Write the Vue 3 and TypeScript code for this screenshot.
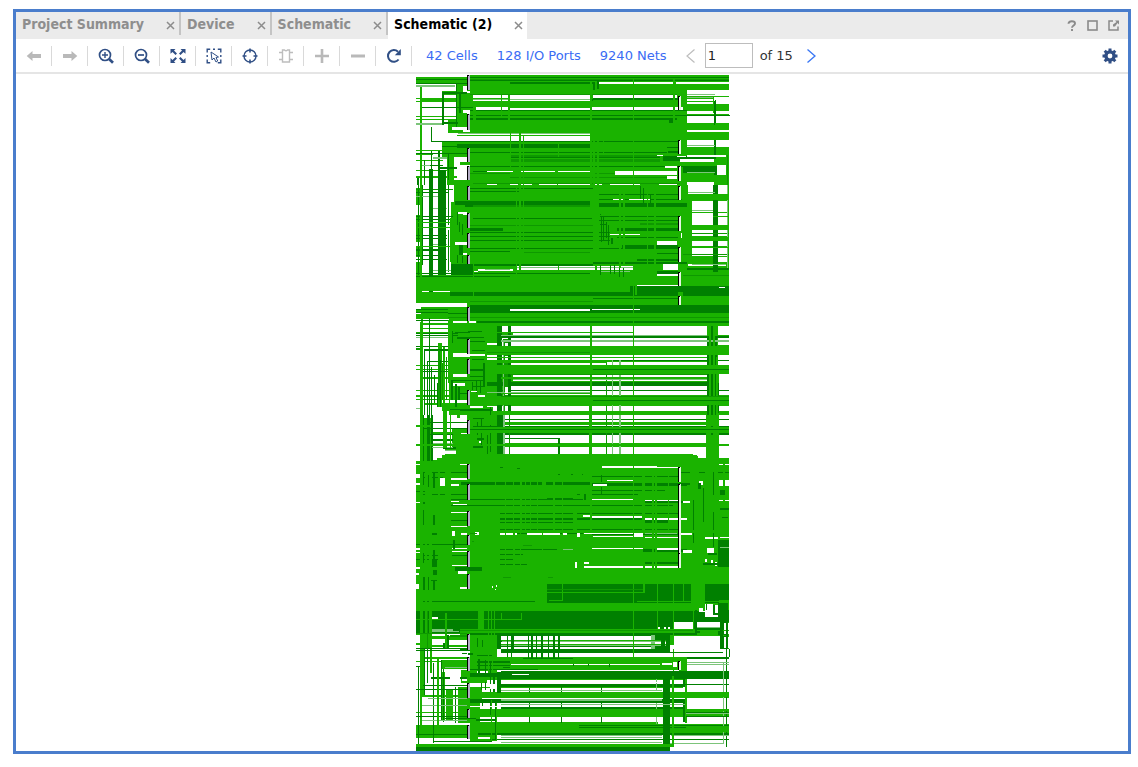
<script setup lang="ts">
import { ref } from 'vue'

const tabs = ['Project Summary', 'Device', 'Schematic', 'Schematic (2)']
const active = ref(3)
const page = ref('1')
const stats = ['42 Cells', '128 I/O Ports', '9240 Nets']

type Tone = 'L' | 'D' | 'M' | 'P' | 'W'
type Layer = [Tone, string]
interface Band { top: number; layers: Layer[] }

const tones: Record<Tone, string> = {
  L: '#1ab300', D: '#008000', M: '#0e9900', P: '#7cc47a', W: '#ffffff',
}

/* Boxes are "x1 y1 x2 y2" in thirds of a pixel, measured from each band's top. */
const bands: Band[] = [
  {
    top: 0,
    layers: [
      ['L', '18 22 180 120,180 15 958 360,18 15 20 16'],
      ['W', '18 15 171 22,18 40 137 360,137 64 180 70,160 48 172 66'],
      ['W', '567 26 790 29,796 26 958 29,567 37 668 42,672 37 790 42,798 37 958 43,832 61 958 102,190 76 545 92,550 76 802 84,190 112 820 120,832 123 958 132,832 138 958 161,832 180 958 186,832 211 958 232,144 187 540 212'],
      ['L', '18 22 172 42,30 50 36 360,36 88 190 92,95 64 142 74,18 84 190 87,18 93 190 96,137 42 158 190,30 94 300 97,190 84 300 86,190 97 545 112,300 92 545 113,18 138 140 140,18 147 140 150,115 150 145 188,115 186 300 190,300 187 540 189,140 194 540 198,95 213 180 262,18 240 180 243,18 252 70 255,18 270 100 273,18 300 120 303,18 319 140 324,110 262 132 345,130 330 180 348,150 275 180 285,832 78 958 80,832 102 958 121,550 121 830 128,832 160 958 180,832 186 958 210,832 234 958 253,832 276 958 284,820 315 958 333'],
      ['D', '18 28 172 31,18 38 170 41,95 65 101 165,95 65 170 72,36 111 190 114,137 42 141 180,148 72 152 180,95 155 160 162,64 172 67 216,64 213 300 216,18 248 170 251,85 243 90 300,57 297 70 360,84 300 108 360,84 290 140 298,42 270 45 360,20 323 26 360,95 228 150 232,64 243 67 300,114 250 118 330,36 285 100 288'],
      ['D', '300 35 550 42,180 22 958 25,180 31 958 33,562 32 567 56,550 36 554 60,550 85 805 91,545 86 550 92,180 121 830 124,180 135 960 138,180 145 800 149,140 222 545 235,180 213 805 217,180 247 770 250,300 262 750 265,760 258 830 272,820 262 918 267,820 288 920 308,912 211 918 263,912 290 920 315,180 288 820 291,180 350 820 353,190 302 230 306,778 150 790 160,770 230 805 235,775 243 805 248,912 92 915 165,915 90 918 160,832 348 958 351'],
      ['M', '180 28 958 29,180 72 800 74,300 255 750 261,300 267 750 276,300 322 805 325,190 338 810 341,180 308 300 311,550 308 740 312,950 255 955 360'],
      ['W', '230 303 310 305,330 303 435 305,445 303 540 306,614 304 802 315,765 288 802 294,770 318 802 328,740 254 760 257,800 257 828 260,830 255 948 260,920 284 948 315,830 336 912 347,810 267 912 275,230 343 260 346,300 343 324 346,334 343 365 346,386 343 440 346,445 343 540 346,550 343 576 346,600 343 690 346,748 343 800 346,140 295 178 300,140 312 172 318,125 170 172 181,152 128 172 136,120 348 170 352'],
      ['P', '18 45 135 50,18 160 95 165,832 71 915 73,832 80 910 84,70 262 110 266,36 285 60 288,832 306 915 310,190 88 545 90,144 190 540 192,832 226 915 229'],
      ['L', '274 74 277 142,295 74 300 150,300 188 304 300,328 190 333 360,338 195 342 360,541 36 546 360,550 196 556 360,562 202 566 360,578 208 582 250,668 27 672 360,790 27 795 160,443 222 447 262,190 92 197 150,810 84 912 87,810 94 912 97,910 78 913 130,145 128 172 170'],
    ],
  },
  {
    top: 115,
    layers: [
      ['L', '18 0 958 375'],
      ['W', '36 0 133 52,36 52 124 270,18 0 30 8,18 60 30 90,18 170 30 185,18 215 30 230,45 205 122 240,36 240 122 258,18 320 60 330,36 318 120 324,125 236 150 244,160 86 171 90,140 82 172 86,134 170 170 180,150 205 172 210'],
      ['W', '834 0 950 28,845 48 950 80,845 84 950 120,830 136 950 154,845 168 950 184,845 188 950 212,925 215 950 232,835 236 948 244,740 133 803 138,600 146 690 149,812 145 826 160,740 168 802 186,205 251 310 257,320 244 668 254,760 235 803 256,740 268 803 272,680 299 803 302,834 120 950 123'],
      ['D', '24 0 27 270,36 0 39 240,57 0 69 325,84 0 108 270,114 0 118 260,908 0 924 84,908 85 924 262,830 250 958 256,18 264 540 268,60 324 130 330,122 237 188 270,188 237 550 244,820 303 958 333,18 272 300 274,910 290 958 293'],
      ['D', '135 48 540 66,180 10 550 13,180 18 330 20,550 28 803 31,550 42 830 46,550 55 830 65,190 99 545 102,180 130 280 138,620 130 805 137,180 142 600 145,180 152 600 155,180 165 600 169,180 189 805 193,180 198 300 202,570 92 803 95,560 105 803 108,740 205 803 208,680 222 803 228,550 232 830 236,740 258 803 267,620 156 803 160,635 180 803 188,180 290 650 293,580 306 658 310,120 304 660 307,120 321 805 332,120 344 550 349,18 345 120 350,550 338 805 341,300 371 958 375,18 360 188 375,660 302 958 320,18 12 115 15,18 20 118 24,18 93 130 96,18 103 130 106,18 150 110 153,18 160 110 163,18 193 108 197,18 210 108 214,18 222 110 226'],
      ['M', '18 12 130 14,190 60 540 66,180 120 550 123,18 291 650 293,190 282 650 284,190 335 550 338,550 284 660 290,690 115 805 119,820 143 958 147,820 158 958 162,820 208 958 211,340 200 540 203,680 352 958 355,820 270 958 273'],
      ['P', '18 32 84 37,70 70 112 73,70 110 112 114,70 176 112 180,834 20 915 24,834 75 910 79,320 245 668 249,570 257 660 260,18 352 185 355,225 252 300 255,845 236 948 239,70 255 122 258,950 0 955 250'],
      ['D', '84 0 108 270,57 0 69 325'],
      ['W', '18 355 180 358,188 257 204 259,110 120 120 135,610 42 640 45,656 42 720 45,927 305 945 308,176 366 185 370,184 372 540 374'],
      ['L', '18 110 180 113,18 125 180 128,18 183 180 186,18 275 958 300,30 0 36 375,18 300 660 318,18 320 120 340,120 100 135 232,125 60 165 80,18 336 550 343,550 0 567 232,815 28 958 46,815 68 845 180,815 120 958 136,815 155 958 168,815 185 958 187,908 92 958 94,318 0 322 300,328 0 332 260,338 0 342 235,628 0 632 250,640 0 644 240,710 0 715 265,733 0 737 255,445 244 448 255,668 240 672 375,676 250 681 330,188 237 192 350,555 240 560 290'],
      ['D', '572 95 574 170,580 97 582 165,588 110 590 160,595 120 598 180,602 160 610 178,570 86 574 90,570 118 590 120,570 240 573 270,600 240 604 268,612 240 616 268,626 250 630 275,640 250 643 275,140 80 143 120,148 110 151 140,155 118 158 150,147 180 158 210,140 210 144 235,155 212 158 235,690 4 693 42,700 8 703 60,720 30 724 60'],
    ],
  },
  {
    top: 230,
    layers: [
      ['L', '18 0 958 375'],
      ['W', '18 8 172 20,18 20 34 375,38 52 116 375,273 78 890 97,310 97 890 106,273 112 890 138,230 165 890 180,295 187 890 197,310 222 890 244,295 258 890 286,230 318 890 334,230 346 890 375,925 78 958 104,925 110 958 136,925 166 958 180,925 184 958 196,928 222 958 286,928 318 958 334,928 348 958 375,310 27 540 33,545 27 690 31,118 64 172 70,150 92 180 116,126 160 180 176,130 222 172 238,130 250 172 258,120 300 172 316,130 176 172 208'],
      ['D', '180 16 958 38,18 26 115 29,18 35 115 38,115 40 172 43,18 60 120 63,18 98 172 101,18 104 172 107,18 137 172 140,230 246 890 259,272 108 958 113,262 78 276 375,890 112 896 375,903 70 908 375,916 112 920 375,295 78 303 375,310 180 590 184,605 180 958 183,272 270 890 274,928 270 958 274,272 356 890 362,928 358 958 362,200 62 958 68,922 250 928 340'],
      ['W', '300 27 540 33,545 27 690 30,276 86 294 97,276 128 294 136,280 168 293 178,280 262 293 283,280 348 293 375'],
      ['M', '280 118 293 375,588 183 592 375,18 145 30 150'],
      ['P', '280 125 283 375,272 120 958 125,272 106 890 108,310 138 890 139,310 237 890 239,230 276 540 279,272 350 540 353,605 180 608 375,628 180 632 375,18 110 116 114,928 290 958 292,18 325 30 328,272 373 890 375,928 372 958 374'],
      ['W', '284 128 294 138,284 168 293 180,284 260 293 285,284 318 293 334,284 348 293 370'],
      ['L', '18 29 172 37,18 42 172 55,18 55 125 58,38 70 172 75,38 84 118 87,180 38 958 62,180 69 910 78,230 139 958 164,180 171 890 174,230 180 590 188,230 196 958 221,272 231 890 236,180 287 958 316,190 334 890 346,272 279 540 282,18 96 310 100,300 96 670 99,30 65 38 375,115 60 130 250,84 130 96 320,100 140 105 320,145 70 230 120,130 117 225 160,125 170 230 220,18 195 172 198,18 208 172 211,40 232 172 236,18 270 172 273,18 285 172 291,18 297 172 301,42 310 172 314,95 310 180 334,100 334 112 375,180 140 230 165,165 180 230 222,165 235 230 285,150 320 250 375,541 70 547 375,537 285 547 375,668 0 672 375,897 68 902 375,909 70 914 375,919 170 925 375'],
      ['D', '42 150 45 375,50 185 53 375,57 55 60 375,64 200 67 330,72 225 75 310,80 250 83 320,90 180 93 320,125 92 128 130,134 95 180 100,140 112 180 117,42 148 115 152,50 183 115 187,40 213 115 216,124 240 128 300,136 252 140 320,145 260 149 300,150 280 172 283,125 240 225 244,180 228 225 231,185 258 225 262,150 328 245 332,120 326 170 330,62 328 66 375,120 345 145 350,175 92 215 96,176 122 225 126,180 110 222 113,185 150 225 153,185 176 222 180,180 208 222 212,185 245 190 270,198 240 202 280,210 240 214 280,220 190 225 260,240 320 244 350,200 62 240 65,200 370 230 374,550 208 958 211,550 299 958 303'],
      ['M', '180 50 958 52,180 2 550 5,115 50 172 52,300 222 890 224,230 156 540 158,272 287 958 289,84 150 90 300,96 190 99 300,108 170 112 300'],
      ['W', '176 64 198 68,180 163 225 168,182 272 200 276,205 286 225 290,180 318 220 324,200 348 235 354,232 130 260 136'],
    ],
  },
  {
    top: 345,
    layers: [
      ['L', '18 0 958 375'],
      ['W', '18 0 30 138,38 0 140 8,70 8 172 40,66 40 126 95,70 95 105 135,105 104 140 118,280 0 890 22,280 30 890 36,280 60 890 84,280 96 890 117,928 0 958 34,928 60 958 86,928 94 958 140,865 96 888 138,850 96 890 122'],
      ['D', '40 0 43 138,50 0 60 138,64 0 70 138,54 20 170 23,38 38 172 42,50 56 130 60,66 72 130 77,100 96 140 102,262 0 280 117,272 12 890 16,928 12 958 15,190 34 958 36,280 55 958 60,280 68 449 72,444 70 449 117,240 30 244 110,230 60 234 117,190 10 222 13,195 40 222 44,200 70 222 74,142 94 220 98,200 20 204 60,212 12 216 90'],
      ['M', '588 0 592 117,297 0 301 117'],
      ['P', '280 0 284 117,606 0 609 117,628 0 632 117,66 95 130 98,105 106 140 109,70 85 130 88,272 90 890 91'],
      ['L', '70 52 172 56,18 30 60 36,100 0 112 100,120 0 124 100,18 86 172 93,180 37 958 53,230 88 958 94,30 0 38 375,80 130 958 375,95 120 860 140,105 116 828 130,138 60 190 120,541 0 547 120,536 0 542 120,668 0 672 130,888 0 902 140,910 0 926 140'],
      ['D', '180 43 958 46,154 202 540 209,540 205 830 213,30 170 172 174,30 237 172 241,120 252 520 256,40 262 60 266,120 270 790 273,545 183 803 187,545 224 765 228,545 236 685 239,270 294 805 296,270 310 670 314,270 322 500 324,545 310 805 314,270 343 805 349,120 315 172 319,270 156 280 158,320 159 330 161,410 250 490 254,400 217 405 221,700 258 825 264,545 357 830 362,270 353 550 357,705 308 776 325,820 205 875 210,812 172 958 175,66 345 82 362,40 345 44 362,18 186 100 190,18 228 60 232'],
      ['W', '150 0 172 12,154 54 172 58,18 148 30 151,18 176 30 190,18 205 30 210,90 190 104 212,122 190 172 194,122 208 148 212,150 147 172 150,122 257 148 260,130 268 170 271,18 260 30 263,122 290 172 294,122 332 172 336,125 350 135 362,150 352 170 358,195 350 206 356,18 345 30 364,206 78 214 84,575 153 740 158,740 156 804 160,548 207 590 214,590 194 668 199,545 252 668 256,700 255 803 258,545 303 668 309,672 303 696 308,704 308 804 316,548 353 803 356,545 360 803 364,285 350 305 358,320 352 346 360,365 352 370 360,382 350 399 359,404 352 450 360,520 300 545 306,520 345 540 350,820 258 858 263,812 308 832 316,845 198 880 210,927 196 958 212,868 358 882 362,928 148 958 151,928 256 958 259,935 350 958 353,812 352 845 355'],
      ['L', '30 140 38 375,45 140 65 375,84 140 90 375,105 140 122 375,254 200 258 215,284 150 287 375,308 150 313 375,330 150 335 375,345 150 349 375,360 150 364 375,380 150 383 375,395 150 408 250,430 150 436 375,455 150 460 375,490 280 500 375,541 120 547 375,668 130 672 375,696 160 704 375,726 160 731 375,736 160 742 375,840 140 868 375,884 140 908 375,912 140 925 375,940 140 945 375,775 160 778 375'],
      ['D', '40 175 43 210,54 180 57 215,70 175 74 220,40 285 43 330,70 300 74 330,848 255 851 350,878 220 881 320,908 170 911 240,908 290 911 355,865 205 872 222,930 225 945 240,930 280 958 284,935 305 955 309,573 180 576 200,573 215 576 240,445 178 449 181,484 178 488 181,515 178 519 181,500 236 510 239,523 236 527 255,550 356 803 359'],
    ],
  },
  {
    top: 460,
    layers: [
      ['L', '18 0 958 375'],
      ['D', '18 242 870 310,412 162 958 210,412 210 928 220,270 10 520 13,545 12 803 16,270 58 440 61,270 72 340 76,270 86 310 88,270 102 350 105,700 58 830 66,705 96 803 102,135 110 215 122,130 176 415 179,30 213 375 217,120 235 375 240,260 164 412 176,925 30 958 112,18 42 172 46,30 75 172 78,18 88 115 91,60 10 85 16,925 220 955 375,858 240 958 277,860 277 935 297,180 310 860 316,262 316 780 375,860 295 938 302'],
      ['L', '18 225 870 242,30 162 412 210,375 178 412 242,842 162 880 242,375 225 860 242,150 298 860 310,180 316 262 375'],
      ['W', '125 4 136 18,154 10 172 16,195 6 206 14,270 8 320 15,350 8 450 15,460 8 470 15,500 8 510 20,522 8 668 12,548 17 668 21,672 8 698 20,704 20 803 23,545 54 668 58,672 54 698 58,735 55 803 60,820 60 846 68,812 10 845 14,18 55 30 59,18 65 30 68,18 112 30 116,18 130 28 136,122 53 172 57,122 62 172 66,125 105 172 109,145 124 172 132,18 162 28 176,150 172 172 176,522 97 538 101,522 109 700 113,705 109 803 113,496 95 500 113,885 20 925 28,890 55 912 70,886 88 890 96,904 90 908 104,915 96 922 108,930 20 958 24,868 234 888 245,885 223 910 256,915 226 925 250,885 256 925 260,792 277 850 296,860 277 930 292,792 318 936 356,780 346 936 356,780 363 936 375,942 280 958 312,942 320 958 354,942 363 958 375,743 290 750 296,762 290 767 296,775 290 780 296,18 266 30 270,64 262 84 266,18 315 30 375,66 313 150 318,66 326 104 357,114 360 172 375,116 330 172 357,273 319 725 330,273 336 780 342,273 350 725 357,273 370 750 375,247 168 250 174,257 165 262 170,254 178 258 180'],
      ['P', '66 298 128 302,66 304 148 307,66 309 148 312,930 50 958 53,275 333 780 335,273 346 780 348,862 292 935 295,724 316 735 357,460 56 490 59,704 10 800 12,84 308 130 312'],
      ['L', '30 0 40 375,46 0 50 375,58 0 65 375,80 0 125 40,84 46 125 108,412 186 700 190,700 162 705 190,416 210 460 213,456 162 460 213,680 213 958 215,668 162 672 375,741 162 744 298,788 162 792 346,818 162 822 213,880 162 884 242,18 268 336 271,333 248 336 270,273 248 276 270,204 242 222 300,235 242 238 375,243 242 246 375,251 242 254 375,105 248 112 320,272 330 790 334,272 341 790 345,66 320 172 325,66 345 172 350,780 300 958 303,780 315 958 318,455 0 460 120,395 0 400 120,330 0 333 120,310 0 314 120,284 0 287 120,726 0 731 115,736 0 742 115,850 242 853 298'],
      ['D', '855 240 862 315,888 223 892 240,910 224 914 252,930 275 938 368,935 318 941 368,948 270 953 375,780 357 958 360,780 366 938 370,272 358 780 368,290 316 294 375,302 316 313 375,354 316 358 375,364 316 368 375,378 316 382 375,392 316 399 375,414 316 418 375,428 316 436 375,444 316 449 375,262 316 272 375,752 316 766 375,768 316 780 375,100 340 104 375,112 316 116 375,150 370 180 375,180 352 222 356,180 358 216 368,200 324 204 360,215 330 219 360,70 60 74 105,64 150 80 154,66 90 82 110,40 70 43 100,70 120 82 135,40 142 44 180,54 142 57 180,70 150 74 180,130 30 134 58,848 10 851 40,908 10 911 50,895 70 920 74,880 100 925 104,18 355 180 357,18 364 180 368'],
      ['M', '18 310 172 313,150 301 850 304,180 10 200 12,414 140 428 143,340 45 365 47,412 178 700 180,280 140 303 143,185 32 192 35,120 316 172 320,50 242 54 375'],
    ],
  },
  {
    top: 570,
    layers: [
      ['W', '18 26 960 332'],
      ['L', '30 26 42 170,60 26 66 100,40 52 172 58,18 62 180 65,92 60 172 88,30 165 172 170,18 215 172 219,18 255 172 293,108 148 130 240,145 170 172 250,180 50 830 90,180 110 830 120,180 140 820 144,180 155 958 175,180 206 958 232,180 246 745 256,180 252 958 278,30 135 36 255,92 96 104 240,152 90 230 130,145 140 215 180,150 180 210 250,180 20 262 100,180 250 262 304,788 26 792 320,806 56 828 120,826 90 831 250'],
      ['D', '18 312 780 332,272 28 780 38,780 35 938 38,830 52 958 56,272 94 958 118,180 100 365 110,272 131 958 134,272 135 820 140,180 176 825 189,272 200 825 206,508 255 958 258,508 262 958 265,205 278 958 285,240 296 958 299,18 30 180 33,18 78 30 80,18 147 172 151,24 78 27 320,42 26 46 165,50 26 54 130,68 70 72 310,70 302 245 307,92 60 96 240,98 88 102 245,105 235 198 238,135 140 138 250,18 229 172 232,64 110 172 116,40 135 172 138,18 283 172 286,820 95 826 140,820 180 826 245,760 118 768 312,768 118 780 332,758 278 768 312,262 96 272 160,240 110 244 156,250 110 255 156,225 125 229 150,212 130 216 150,215 180 219 198,240 190 244 225,256 188 260 300,198 236 260 242'],
      ['D', '357 144 360 158,453 138 456 155,573 138 576 155,357 190 360 202,453 190 456 202,573 190 576 202,357 232 360 248,453 232 456 248,573 232 576 248,948 26 952 320,956 26 959 50,458 136 575 139,180 86 385 90,200 64 300 68,200 75 300 79,340 54 490 56,280 80 300 84,200 45 250 48'],
      ['P', '830 66 958 70,830 73 958 76,272 150 757 152,272 178 757 182,272 192 825 194,272 286 757 288,782 286 958 288,272 292 757 294,940 70 943 310,780 308 942 311,272 306 757 308,739 118 742 154,739 190 742 206,739 232 742 252,54 174 172 177,104 80 172 83,36 195 172 197,828 220 958 222,36 240 172 242'],
      ['L', '18 312 792 322,828 155 958 172,828 206 958 212,828 258 958 275,243 180 246 300,258 190 261 302,80 50 86 260,234 26 238 90,246 26 249 90,18 8 36 14,785 108 792 322'],
      ['W', '302 72 750 76,755 68 785 76,790 66 800 82,306 103 357 106,272 126 760 130,120 98 150 130,200 92 235 98,240 132 260 146,155 118 172 124,180 198 260 202,205 290 240 296'],
      ['D', '490 72 493 78,534 72 537 78,597 72 600 80,290 26 294 50,302 26 306 50,354 26 358 54,364 26 368 54,378 26 382 54,394 26 399 54,414 26 418 54,430 26 434 54,444 26 448 54,828 217 958 220,828 228 958 231,150 28 172 31,155 40 172 43,175 40 188 44,205 58 209 110,225 60 229 110,240 70 244 110'],
      ['L', '668 26 672 56'],
    ],
  },
]

/* Cell edges, in pixels of the drawing: [left, top, bottom]. */
const cells: [number, number, number][] = [
  [51, 1, 16], [51, 40, 56], [51, 74, 88], [51, 92, 106], [51, 112, 126], [51, 139, 154], [51, 159, 174],
  [51, 181, 190], [51, 233, 247], [51, 265, 280], [51, 285, 300], [51, 316, 331], [51, 346, 360],
  [51, 390, 405], [51, 410, 426], [51, 437, 452], [51, 461, 471], [51, 477, 493], [51, 500, 515],
  [51, 560, 576], [51, 583, 597], [51, 609, 624], [51, 635, 644], [51, 651, 665],
  [262, 22, 36], [262, 66, 80], [262, 92, 107], [262, 112, 126], [262, 142, 157], [262, 173, 188],
  [262, 198, 212], [262, 222, 231], [262, 393, 408], [262, 410, 479], [262, 479, 494], [262, 587, 596],
]

const bandPath = (band: Band, boxes: string): string =>
  boxes
    .split(',')
    .map((box) => {
      const [x1, y1, x2, y2] = box.split(' ').map(Number)
      const left = Math.round((x1 - 18) / 3)
      const right = Math.max(left + 1, Math.round((x2 - 18) / 3))
      const top = Math.round(y1 / 3) + band.top - 4
      const bottom = Math.max(top + 1, Math.round(y2 / 3) + band.top - 4)
      return `M${left} ${top}H${right}V${bottom}H${left}Z`
    })
    .join('')

const shapes = bands.flatMap((band) =>
  band.layers.map(([tone, boxes]) => ({ fill: tones[tone], d: bandPath(band, boxes) })),
)
</script>

<template>
  <main class="screen">
    <section class="panel">
      <header class="tabbar">
        <nav class="tabs">
          <div v-for="(name, i) in tabs" :key="name" class="tab" :class="{ active: i === active, last: i === tabs.length - 1 }">
            <button class="tab-name" type="button" @click="active = i">{{ name }}</button>
            <button class="close" type="button" :aria-label="'Close ' + name">
              <svg width="9" height="9" viewBox="0 0 9 9"><path d="M1 1l7 7M8 1L1 8" stroke="#8c8c8c" stroke-width="1.5" /></svg>
            </button>
          </div>
        </nav>
        <div class="window-actions">
          <button type="button" aria-label="Help">
            <svg width="10" height="12" viewBox="0 0 10 12"><path d="M1.500 3.800C1.500 1.800 3 1.200 4.800 1.200c2 0 3.200.8 3.200 2.300 0 2-3 1.900-3 4.300M5 9v2" fill="none" stroke="#8a8a8a" stroke-width="1.900" /></svg>
          </button>
          <button type="button" aria-label="Maximize">
            <svg width="11" height="11" viewBox="0 0 11 11"><rect x="1" y="1" width="9" height="9" fill="none" stroke="#8a8a8a" stroke-width="1.600" /></svg>
          </button>
          <button type="button" aria-label="Float">
            <svg width="11" height="11" viewBox="0 0 11 11"><path d="M5 1H1v9h9V6.500" fill="none" stroke="#8a8a8a" stroke-width="1.500" /><path d="M5 6.500V4.500L8.500 2 7 .5h4v4L9.500 3 7 6.500z" fill="#8a8a8a" /></svg>
          </button>
        </div>
      </header>

      <div class="toolbar">
        <div class="tools">
          <button type="button" aria-label="Back"><svg viewBox="0 0 16 16"><path d="M.7 8L6.500 3v3H15v4H6.500v3z" fill="#b9b9b9" /></svg></button>
          <button type="button" aria-label="Forward"><svg viewBox="0 0 16 16"><path d="M15.300 8L9.500 3v3H1v4h8.500v3z" fill="#b9b9b9" /></svg></button>
          <button type="button" aria-label="Zoom in"><svg viewBox="0 0 16 16" fill="none" stroke="#304f85"><circle cx="7" cy="7" r="5.500" stroke-width="1.700" /><path d="M7 4v6M4 7h6" stroke-width="1.400" /><path d="M10.800 10.800L15 14.800" stroke-width="2.700" /></svg></button>
          <button type="button" aria-label="Zoom out"><svg viewBox="0 0 16 16" fill="none" stroke="#304f85"><circle cx="7" cy="7" r="5.500" stroke-width="1.700" /><path d="M4 7h6" stroke-width="1.700" /><path d="M10.800 10.800L15 14.800" stroke-width="2.700" /></svg></button>
          <button type="button" aria-label="Zoom fit"><svg viewBox="0 0 16 16"><path d="M.5 1h5L4 2.500l3 3L5.500 7l-3-3L.5 5.800zM15.500 1v4.800l-2-1.800-3 3L9 5.500l3-3L10.500 1zM.5 15v-5l2 2 3-3L7 10.500l-3 3L5.500 15zM15.500 15h-5l1.500-1.500-3-3L10.500 9l3 3 2-2z" fill="#304f85" /></svg></button>
          <button type="button" aria-label="Select area"><svg viewBox="0 0 16 16" fill="none" stroke="#304f85"><path d="M1.200 4.500V1.200h3M7 1.200h2M11.800 1.200h3v3.300M14.800 7v2M14.800 11.500v3.300h-3M4.200 14.800h-3v-3.300M1.200 9V7" stroke-width="1.400" /><path d="M5 4l1 8 2-2 2 4 1.700-1L10 9.500l2.500-.5z" /></svg></button>
          <button type="button" aria-label="Center"><svg viewBox="0 0 16 16" fill="none" stroke="#304f85"><circle cx="8" cy="8" r="6" stroke-width="1.400" /><path d="M8 .5v4M8 11.500v4M.5 8h4M11.500 8h4" stroke-width="1.600" /></svg></button>
          <button type="button" aria-label="Cell"><svg viewBox="0 0 16 16" fill="none" stroke="#bdbdbd" stroke-width="1.400"><path d="M4.500 2h2q1.500 1.500 3 0h2v12h-7zM1 4.500h3.500M1 11.500h3.500M11.500 4.500H15M11.500 11.500H15" /></svg></button>
          <button type="button" aria-label="Expand"><svg viewBox="0 0 16 16"><path d="M8 1v14M1 8h14" stroke="#b9b9b9" stroke-width="2.600" /></svg></button>
          <button type="button" aria-label="Collapse"><svg viewBox="0 0 16 16"><path d="M1 8h14" stroke="#b9b9b9" stroke-width="3" /></svg></button>
          <button type="button" aria-label="Refresh"><svg viewBox="0 0 16 16"><path d="M12.600 11.500A5.900 5.900 0 1 1 12 3.700" fill="none" stroke="#304f85" stroke-width="2" /><path d="M14.800 1v6.200H8.800z" fill="#304f85" /></svg></button>
        </div>
        <a v-for="s in stats" :key="s" class="stat" href="#">{{ s }}</a>
        <div class="pager">
          <button type="button" aria-label="Previous page"><svg width="9" height="16" viewBox="0 0 9 16"><path d="M8.500 1.500L1 8l7.500 6.500" fill="none" stroke="#bdbdbd" stroke-width="1.200" /></svg></button>
          <input v-model="page" type="text" aria-label="Page">
          <span class="total">of 15</span>
          <button type="button" aria-label="Next page"><svg width="9" height="16" viewBox="0 0 9 16"><path d="M.5 1.500L8 8 .5 14.500" fill="none" stroke="#3b78f5" stroke-width="1.400" /></svg></button>
        </div>
        <button class="settings" type="button" aria-label="Settings">
          <svg width="16" height="16" viewBox="0 0 16 16"><circle cx="8" cy="8" r="4.100" fill="none" stroke="#304f85" stroke-width="3.400" /><path d="M8 .5v3M8 12.500v3M.5 8h3M12.500 8h3M2.700 2.700l2 2M11.300 11.300l2 2M2.700 13.300l2-2M11.300 4.700l2-2" stroke="#304f85" stroke-width="3" /></svg>
        </button>
      </div>

      <div class="canvas">
        <svg class="schematic" viewBox="0 0 314 677" preserveAspectRatio="xMidYMin meet" shape-rendering="crispEdges" role="img" aria-label="Schematic nets">
          <path v-for="(s, i) in shapes" :key="i" :d="s.d" :fill="s.fill" />
          <g v-for="([x, top, bottom], i) in cells" :key="'cell' + i">
            <rect :x="x + 1" :y="top" width="2" :height="bottom - top" :fill="x < 100 ? '#b4acc4' : '#e4f4e0'" />
            <rect :x="x" :y="top" width="1" :height="bottom - top" fill="#000000" />
            <rect :x="x" :y="top" width="2" height="1" fill="#000000" />
          </g>
        </svg>
      </div>
    </section>
  </main>
</template>

<style>
body {
  margin: 0;
  background: #fff;
}
</style>

<style scoped>
.screen {
  box-sizing: border-box;
  height: 100vh;
  padding: 9px 7px 13px 13px;
  font-family: 'DejaVu Sans', sans-serif;
  font-size: 13px;
  line-height: 18px;
}
.panel {
  box-sizing: border-box;
  height: 100%;
  display: flex;
  flex-direction: column;
  border: 3px solid #4a7dcc;
  background: #fff;
}
button {
  display: flex;
  align-items: center;
  justify-content: center;
  margin: 0;
  padding: 0;
  border: 0;
  background: none;
  color: inherit;
  font: inherit;
}
.tabbar {
  display: flex;
  justify-content: space-between;
  flex: none;
  height: 27px;
  background: #ebebeb;
}
.tabs {
  display: flex;
  font-family: 'DejaVu Sans Condensed', 'DejaVu Sans', sans-serif;
  font-size: 14px;
}
.tab {
  display: flex;
  align-items: center;
  gap: 22px;
  height: 23px;
  padding: 0 4px 0 6px;
  border-right: 2px solid #c4c4c4;
  color: #8e8e8e;
  font-weight: bold;
}
.tab.last {
  border-right: 0;
}
.tab.active {
  height: 27px;
  background: #fff;
  color: #000;
}
.tab-name {
  height: 23px;
  align-self: flex-start;
}
.close {
  height: 23px;
  align-self: flex-start;
  padding-top: 3px;
  box-sizing: border-box;
}
.window-actions {
  display: flex;
  align-items: center;
  gap: 10px;
  padding-right: 9px;
}
.toolbar {
  display: flex;
  align-items: center;
  flex: none;
  height: 33px;
  border-bottom: 2px solid #e5e5e5;
}
.tools {
  display: flex;
  margin-right: 14px;
}
.tools button {
  box-sizing: border-box;
  width: 36px;
  height: 20px;
  border-right: 1px solid #d9d9d9;
}
.tools svg {
  width: 16px;
  height: 16px;
}
.stat {
  margin-right: 19px;
  color: #3a6cf4;
  text-decoration: none;
  white-space: nowrap;
}
.pager {
  display: flex;
  align-items: center;
}
.pager input {
  box-sizing: border-box;
  width: 48px;
  height: 25px;
  margin: 0 7px 0 10px;
  padding: 0 2px;
  border: 1px solid #bdbdbd;
  background: #fff;
  color: #222;
  font: inherit;
}
.total {
  margin-right: 14px;
  color: #333;
}
.settings {
  margin-left: auto;
  margin-right: 10px;
}
.canvas {
  flex: 1;
  min-height: 0;
  display: flex;
  justify-content: center;
  padding-left: 2px;
}
.schematic {
  display: block;
  height: 100%;
}
</style>
